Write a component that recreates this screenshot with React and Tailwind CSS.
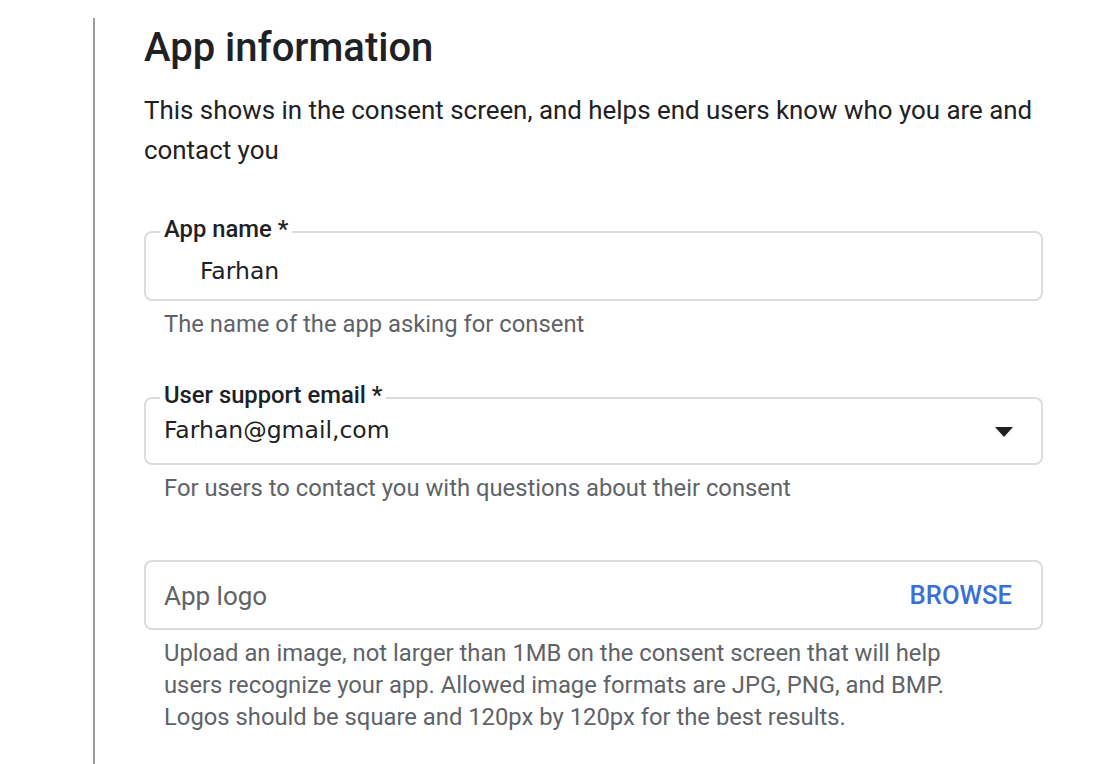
export default function App() {
  return (
    <div className="flex h-[764px] overflow-hidden bg-white pl-[93px] pt-[18px] font-['Roboto',sans-serif] text-[#202124]">
      <div className="flex-1 border-l-2 border-[#9e9e9e] pl-[49px] pr-[73px]">
        <h1 className="mt-[6px] text-[40px] font-medium leading-[48px]">
          App information
        </h1>
        <p className="mt-[18px] text-[25.9px] leading-[40px]">
          This shows in the consent screen, and helps end users know who you are and contact you
        </p>

        {/* App name */}
        <div className="relative mt-[61px] flex h-[70px] items-center rounded-lg border-2 border-[#dadce0] px-[18px] pt-[12px]">
          <FieldLabel>App name *</FieldLabel>
          <span className="ml-[36px] font-['DejaVu_Sans',sans-serif] text-[23.5px]">Farhan</span>
        </div>
        <Helper className="mt-[7px]">The name of the app asking for consent</Helper>

        {/* Support email */}
        <div className="relative mt-[57px] flex h-[68px] items-center justify-between rounded-lg border-2 border-[#dadce0] pl-[18px] pr-[28px]">
          <FieldLabel>User support email *</FieldLabel>
          <span className="font-['DejaVu_Sans',sans-serif] text-[23.5px]">Farhan@gmail,com</span>
          <svg width="18" height="10" viewBox="0 0 18 10" className="mt-[2px]">
            <polygon points="0,0 18,0 9,10" fill="#202124" />
          </svg>
        </div>
        <Helper className="mt-[7px]">For users to contact you with questions about their consent</Helper>

        {/* App logo */}
        <div className="mt-[56px] flex h-[70px] items-center justify-between rounded-lg border-2 border-[#dadce0] pl-[18px] pr-[29px]">
          <span className="pt-[3px] text-[26px] text-[#5f6368]">App logo</span>
          <button className="text-[25.6px] font-medium text-[#3b6fd8]">BROWSE</button>
        </div>
        <Helper className="mt-[7px] max-w-[820px]">
          Upload an image, not larger than 1MB on the consent screen that will help users recognize your app. Allowed image formats are JPG, PNG, and BMP. Logos should be square and 120px by 120px for the best results.
        </Helper>
      </div>
    </div>
  );
}

const FieldLabel = ({ children }) => (
  <span className="absolute -top-[16px] left-[14px] bg-white px-[4px] text-[23.8px] font-medium leading-[24px] text-[#202124]">
    {children}
  </span>
);

const Helper = ({ className = "", children }) => (
  <p className={`pl-[20px] text-[23.8px] leading-[32px] text-[#5f6368] ${className}`}>
    {children}
  </p>
);
